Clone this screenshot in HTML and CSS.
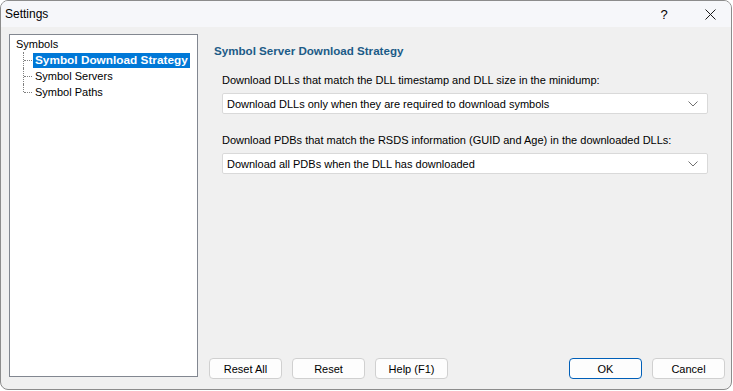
FILE: index.html
```html
<!DOCTYPE html>
<html>
<head>
<meta charset="utf-8">
<link rel="stylesheet" href="styles.css">
</head>
<body>
<div class="window">
  <div class="titlebar">
    <span class="title">Settings</span>
    <span class="help">?</span>
    <span class="close">
      <svg width="11" height="11" viewBox="0 0 11 11"><path d="M0.5 0.5 L10.5 10.5 M10.5 0.5 L0.5 10.5" stroke="#1a1a1a" stroke-width="1" fill="none"/></svg>
    </span>
  </div>
  <div class="main">
    <div class="tree">
      <div class="node root">Symbols</div>
      <div class="children">
        <div class="node child"><span class="label selected">Symbol Download Strategy</span></div>
        <div class="node child"><span class="label">Symbol Servers</span></div>
        <div class="node child last"><span class="label">Symbol Paths</span></div>
      </div>
    </div>
    <div class="right">
      <div class="content">
        <div class="heading">Symbol Server Download Strategy</div>
        <div class="field">
          <div class="flabel">Download DLLs that match the DLL timestamp and DLL size in the minidump:</div>
          <div class="combo"><span>Download DLLs only when they are required to download symbols</span>
            <svg class="chev" width="10" height="6" viewBox="0 0 10 6"><path d="M0.5 0.5 L5 5 L9.5 0.5" stroke="#707070" stroke-width="1" fill="none"/></svg>
          </div>
        </div>
        <div class="field">
          <div class="flabel">Download PDBs that match the RSDS information (GUID and Age) in the downloaded DLLs:</div>
          <div class="combo"><span>Download all PDBs when the DLL has downloaded</span>
            <svg class="chev" width="10" height="6" viewBox="0 0 10 6"><path d="M0.5 0.5 L5 5 L9.5 0.5" stroke="#707070" stroke-width="1" fill="none"/></svg>
          </div>
        </div>
      </div>
      <div class="buttons">
        <div class="group">
          <button class="btn">Reset All</button>
          <button class="btn">Reset</button>
          <button class="btn">Help (F1)</button>
        </div>
        <div class="group">
          <button class="btn default">OK</button>
          <button class="btn">Cancel</button>
        </div>
      </div>
    </div>
  </div>
</div>
</body>
</html>
```

FILE: styles.css
```css
html, body {
  margin: 0;
  padding: 0;
  background: #ffffff;
}
body {
  font-family: "Liberation Sans", Arial, sans-serif;
  font-size: 11px;
  color: #000;
}
.window {
  box-sizing: border-box;
  width: 732px;
  height: 390px;
  border: 1px solid #8c8c8c;
  border-radius: 8px;
  background: #f0f0f0;
  overflow: hidden;
  display: flex;
  flex-direction: column;
}
.titlebar {
  height: 26px;
  background: #f6f7fa;
  display: flex;
  align-items: center;
  padding-left: 4px;
  flex: none;
}
.title {
  font-size: 12px;
  flex: 1;
}
.help {
  font-size: 13px;
  width: 46px;
  text-align: center;
}
.close {
  width: 46px;
  display: flex;
  justify-content: center;
  margin-right: -2px;
}
.main {
  flex: 1;
  display: flex;
  padding: 7px 0 0 8px;
}
.tree {
  box-sizing: border-box;
  width: 189px;
  height: 343px;
  background: #fff;
  border: 1px solid #828790;
  padding: 2px 0 0 6px;
  flex: none;
}
.node {
  height: 16px;
  line-height: 16px;
  white-space: nowrap;
}
.root {
  height: 15px;
  line-height: 15px;
}
.children {
  margin-left: 7px;
}
.child {
  position: relative;
  padding-left: 10px;
}
.child::before {
  content: "";
  position: absolute;
  left: 0;
  top: 0;
  height: 16px;
  border-left: 1px dotted #808080;
}
.child.last::before {
  height: 8px;
}
.child::after {
  content: "";
  position: absolute;
  left: 1px;
  top: 8px;
  width: 8px;
  border-top: 1px dotted #808080;
}
.label {
  padding: 0 2px;
  display: inline-block;
  height: 15px;
  line-height: 15px;
}
.selected {
  background: #0078d7;
  color: #fff;
  font-weight: bold;
  font-size: 11.8px;
}
.right {
  flex: 1;
  display: flex;
  flex-direction: column;
  margin-left: 11px;
}
.content {
  flex: 1;
  padding-left: 5px;
}
.heading {
  color: #1c5b87;
  font-weight: bold;
  font-size: 11.6px;
  margin-top: 9px;
  height: 16px;
  line-height: 16px;
}
.field {
  margin-left: 8px;
  margin-right: 23px;
}
.field + .field {
  margin-top: 19px;
}
.heading + .field {
  margin-top: 14px;
}
.flabel {
  height: 15px;
  line-height: 15px;
  margin-bottom: 5px;
  white-space: nowrap;
}
.combo {
  box-sizing: border-box;
  height: 21px;
  background: #fff;
  border: 1px solid #d9d9d9;
  border-radius: 2px;
  display: flex;
  align-items: center;
  justify-content: space-between;
  padding: 0 9px 0 4px;
}
.buttons {
  display: flex;
  justify-content: space-between;
  margin-bottom: 10px;
  margin-right: 6px;
}
.group {
  display: flex;
  gap: 10px;
}
.btn {
  box-sizing: border-box;
  width: 73px;
  height: 21px;
  font-family: "Liberation Sans", Arial, sans-serif;
  font-size: 11px;
  color: #000;
  background: #fdfdfd;
  border: 1px solid #d0d0d0;
  border-radius: 4px;
  padding: 0;
}
.btn.default {
  border-color: #005fb8;
}
```
